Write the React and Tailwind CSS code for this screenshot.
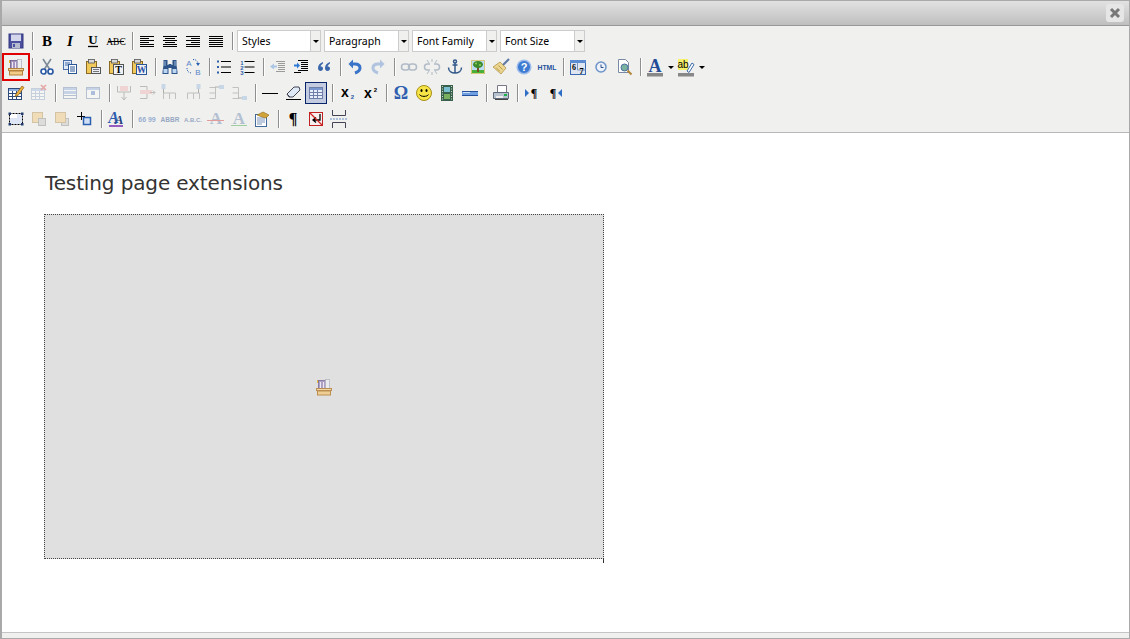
const Grid = ({x=3,y=4,w=14,h=12,c="#7b93bd",head="#8fb0e0",bg="#fff"}) => (
  <>
    <rect x={x+.5} y={y+.5} width={w-1} height={h-1} fill={bg} stroke={c}/>
    <rect x={x+1} y={y+1} width={w-2} height="2" fill={head}/>
    <path d={`M${x+1} ${y+5.5}H${x+w-1}M${x+1} ${y+8.5}H${x+w-1}M${x+4.5} ${y+3}V${y+h-1}M${x+8.5} ${y+3}V${y+h-1}`} stroke={c} fill="none"/>
  </>
);
const Lines = ({rows}) => <path d={rows.map(([a,b],i)=>`M${a} ${5.5+i*2}H${b}`).join("")} stroke="#000"/>;
const T = ({x=10,y=14,s=9,c="#000",w="bold",f="Liberation Sans",st="normal",children}) => (
  <text x={x} y={y} fontSize={s} fill={c} fontWeight={w} fontFamily={`"${f}", sans-serif`} fontStyle={st} textAnchor="middle">{children}</text>
);
const Basket = () => (
  <>
    <rect x="3" y="3" width="2" height="3" fill="#e8b52e"/>
    <rect x="4.500" y="3.500" width="7" height="8" fill="#a596c0" stroke="#5d4f86" strokeWidth=".7"/>
    <path d="M6.500 5v6M9.500 5v6" stroke="#efeaf6"/>
    <rect x="11.500" y="2.500" width="4" height="9" fill="#eceef2" stroke="#a8acb8" strokeWidth=".7"/>
    <rect x="2.500" y="11.500" width="15" height="2" fill="#f2d59a" stroke="#b5803a"/>
    <rect x="3.500" y="14" width="13" height="4" fill="#f3cd88" stroke="#b5803a"/>
  </>
);
const InsertCols = ({top, mirror, children}) => (
  <g opacity=".38">
    <g transform={mirror?"translate(20,0) scale(-1,1)":undefined}>
      <path d={top?"M3.500 16v-6h12v6M9.500 10v6":"M3.500 4.500h6v11h-6M3.500 10h6"} stroke="#777" fill="none"/>
    </g>
    {children}
  </g>
);
const Pil = ({x=10,y=15,s=13}) => <T x={x} y={y} s={s} f="Liberation Serif">¶</T>;
const Clip = () => <><rect x="3.500" y="4.500" width="10" height="12" fill="#f1c95a" stroke="#8b6a26"/><rect x="5.500" y="2.500" width="6" height="3.500" fill="#d8d8d8" stroke="#555" strokeWidth=".8"/></>;
const icons = {
  save: <><rect x="3" y="3" width="14" height="14" fill="#4a4fa0" stroke="#33387f"/><rect x="5" y="3.500" width="10" height="6.500" fill="#d4d7ec"/><rect x="6" y="12" width="8" height="5" fill="#b6bace"/><rect x="7" y="13" width="2" height="3" fill="#4a4fa0"/></>,
  bold: <T s={15} y={15} f="Liberation Serif">B</T>,
  italic: <T s={15} y={15} f="Liberation Serif" st="italic">I</T>,
  under: <><T s={13} y={13} f="Liberation Serif">U</T><path d="M5 15.500H15" stroke="#000" strokeWidth="1.300"/></>,
  strike: <><T s={9.500} y={13.500} w="normal" f="Liberation Serif">ABC</T><path d="M2 10.500H18" stroke="#000"/></>,
  left: <Lines rows={[[3,17],[3,12],[3,17],[3,12],[3,17],[3,17]]}/>,
  center: <Lines rows={[[3,17],[5,15],[3,17],[5,15],[3,17],[3,17]]}/>,
  right: <Lines rows={[[3,17],[8,17],[3,17],[8,17],[3,17],[3,17]]}/>,
  full: <Lines rows={[[3,17],[3,17],[3,17],[3,17],[3,17],[3,17]]}/>,
  box: <Basket/>,
  cut: <><path d="M6 2l6.500 10M14 2L7.500 12" stroke="#7d8a99" strokeWidth="1.600"/><circle cx="6.500" cy="14.500" r="2.500" fill="#fff" stroke="#2d5aa5" strokeWidth="1.700"/><circle cx="13.500" cy="14.500" r="2.500" fill="#fff" stroke="#2d5aa5" strokeWidth="1.700"/></>,
  copy: <><rect x="3.500" y="3.500" width="8" height="9" fill="#dfe9f7" stroke="#4a6fa8"/><path d="M5 6h5M5 8h5" stroke="#4a6fa8"/><rect x="8.500" y="7.500" width="8" height="9" fill="#fff" stroke="#2b5797"/><path d="M10 10h5M10 12h5M10 14h5" stroke="#2b5797"/></>,
  paste: <><Clip/><rect x="8.500" y="10.500" width="9" height="6" fill="#e8edf5" stroke="#555"/><path d="M10 12.500h6M10 14.500h6" stroke="#777"/></>,
  pastet: <><Clip/><rect x="7.500" y="7.500" width="10" height="10" fill="#eef1f5" stroke="#555"/><T x={12.500} y={16} s={10} f="Liberation Serif">T</T></>,
  pastew: <><Clip/><rect x="7.500" y="7.500" width="10" height="10" fill="#eef1f5" stroke="#2b5797"/><T x={12.500} y={16} s={9.500} c="#2b4fa5" f="Liberation Serif">W</T></>,
  find: <><path d="M3.500 3h4v5h1v-1h3v1h1V3h4v5l1 7v2h-6V11h-3v6h-6v-2l1-7z" fill="#2c5488"/><rect x="3.500" y="12" width="4" height="4" fill="#bcd6f2"/><rect x="12.500" y="12" width="4" height="4" fill="#bcd6f2"/><path d="M5 4v5M15 4v5" stroke="#9db8d8"/></>,
  replace: <><T x={6} y={9} s={8} c="#5a86c8" w="normal">A</T><T x={15} y={17.500} s={8} c="#5a86c8" w="normal">B</T><path d="M4 11c0 3.500 2 5 5 5M10 2.500c3 0 5 1.500 5 5" stroke="#2b5fb0" strokeDasharray="1 1" fill="none"/><path d="M13 6l2 3 2-3z" fill="#2b5fb0"/></>,
  ul: <><path d="M3 4.500h2M3 10h2M3 15.500h2" stroke="#2e5fa8" strokeWidth="2"/><path d="M7 4.500h10M7 10h10M7 15.500h10" stroke="#000"/></>,
  ol: <><T x={5} y={7.500} s={6} c="#2e5fa8">1</T><T x={5} y={12.500} s={6} c="#2e5fa8">2</T><T x={5} y={18} s={6} c="#2e5fa8">3</T><path d="M7.500 4.500h10M7.500 10h10M7.500 15.500h10" stroke="#000"/></>,
  outdent: <g opacity=".35"><path d="M8 4.500h9M10 6.500h7M10 8.500h7M10 10.500h7M10 12.500h7M8 14.500h9" stroke="#000"/><path d="M2 9.500l4-3v2h3v2H6v2z" fill="#2e78d6"/></g>,
  indent: <><path d="M7 3.500h10M10 5.500h7M10 7.500h7M10 9.500h7M10 11.500h7M7 13.500h10M3 15.500h7" stroke="#000"/><path d="M9 8.500l-3-3v2H3v2h3v2z" fill="#2e78d6"/></>,
  quote: <path d="M9 5C6 6 4 8 4 11c0 2 1 3 2.500 3S9 13 9 11.500 8 9.500 6.500 9.500C7 8 8 7 9 6.500zM16 5c-3 1-5 3-5 6 0 2 1 3 2.500 3s2.500-1 2.500-2.500-1-2-2.500-2c.5-1.500 1.500-2.500 2.500-3z" fill="#3a66ac"/>,
  undo: <><path d="M7 7h3c3 0 5 1.500 5 4s-2 4-5 5" stroke="#3a74c9" strokeWidth="3" fill="none"/><path d="M8 2.500v9L3.500 7z" fill="#3a74c9"/></>,
  redo: <g opacity=".35" transform="translate(20,0) scale(-1,1)"><path d="M7 7h3c3 0 5 1.500 5 4s-2 4-5 5" stroke="#3a74c9" strokeWidth="3" fill="none"/><path d="M8 2.500v9L3.500 7z" fill="#3a74c9"/></g>,
  link: <g opacity=".35" fill="none" stroke="#3d5a80" strokeWidth="1.500"><rect x="2.500" y="7" width="8" height="6" rx="3"/><rect x="9.500" y="7" width="8" height="6" rx="3"/></g>,
  unlink: <g opacity=".35" fill="none" stroke="#3d5a80" strokeWidth="1.500"><path d="M8 7H5.500a3 3 0 000 6H8M12 7h2.500a3 3 0 010 6H12"/><path d="M10 2v3M10 15v3M5 3l2 3M15 3l-2 3M5 17l2-3M15 17l-2-3" strokeWidth="1"/></g>,
  anchor: <g fill="none" stroke="#345a8c" strokeWidth="1.500"><circle cx="10" cy="4.500" r="1.500"/><path d="M10 6v10M7.500 8h5M3.500 10.500c0 3.500 3 5.500 6.500 5.500s6.500-2 6.500-5.500"/></g>,
  image: <><rect x="3" y="3" width="14" height="14" fill="#bcdcf4"/><rect x="3" y="13" width="14" height="4" fill="#46b038"/><path d="M9 10h2v5H9z" fill="#7a5020"/><ellipse cx="10" cy="7.500" rx="5" ry="3.500" fill="#3a8a2e"/><circle cx="8" cy="6.500" r="1" fill="#9ccc55"/><circle cx="12" cy="8" r="1" fill="#9ccc55"/><path d="M3.500 3.500h13v13h-13z" fill="none" stroke="#d8c87a"/></>,
  clean: <><path d="M11.500 8.500L18 2" stroke="#5e7ca6" strokeWidth="2.200"/><path d="M9 5l6 6-5 6-8-7z" fill="#ecd690" stroke="#a88a3d" strokeWidth=".7"/><path d="M5 10.500l4 4M7.500 8.500l4 4" stroke="#b69a4d"/></>,
  help: <><circle cx="10" cy="10" r="6.800" fill="#3d7ad1" stroke="#9dbceb" strokeWidth="1.500"/><T y={14} s={11} c="#fff">?</T></>,
  html: <T y={13} s={6.800} c="#24509c">HTML</T>,
  date: <><rect x="2.500" y="3.500" width="15" height="14" fill="#dfe6f1" stroke="#3a6ab0"/><rect x="2" y="3" width="16" height="3" fill="#5b8bd0"/><path d="M9.500 6v7h8" stroke="#7b93bd" fill="none"/><T x={6} y={13} s={8} f="Liberation Serif">6</T><T x={13.500} y={17} s={9} f="Liberation Serif">7</T></>,
  time: <><circle cx="10" cy="10" r="5" fill="#eef3fb" stroke="#6d93c8" strokeWidth="1.500"/><path d="M10 7.500v3h2.500" stroke="#2a4c84" fill="none"/></>,
  preview: <><path d="M4.500 2.500h7l3 3v10h-10z" fill="#fff" stroke="#7a8aa5"/><circle cx="10.500" cy="10.500" r="3.500" fill="#79b3a0" stroke="#4c6fa0"/><path d="M13.500 13.500l4 4" stroke="#b28435" strokeWidth="2"/></>,
  fore: <><T y={15} s={18} c="#234d96" f="Liberation Serif">A</T><rect x="2" y="16" width="16" height="3.500" fill="#888"/></>,
  back: <><rect x="2" y="2" width="10" height="11" fill="#f5f06a"/><T x={7} y={10.500} s={10} w="normal">ab</T><path d="M11 14l5-8 2 1.500-5 8z" fill="#fff" stroke="#3e6aa8"/><rect x="2" y="16" width="16" height="3.500" fill="#888"/></>,
  tedit: <><Grid x={2} y={5} w={14} h={12} c="#2d4a78"/><path d="M10 11l6-8 2 1.500-6 8-3 1z" fill="#f0b23e" stroke="#8a5c14" strokeWidth=".7"/></>,
  tdel: <g opacity=".35"><Grid x={2} y={5} w={14} h={12}/><path d="M12 2l5 5M17 2l-5 5" stroke="#d02020" strokeWidth="1.600"/></g>,
  row: <g opacity=".35"><rect x="3.500" y="4.500" width="13" height="11" fill="#fff" stroke="#4a6a9c"/><rect x="4" y="5" width="12" height="2" fill="#7aa0d8"/><rect x="4" y="8" width="12" height="3" fill="#7aa0d8"/><path d="M4 12.500h12" stroke="#4a6a9c"/></g>,
  cell: <g opacity=".35"><rect x="3.500" y="4.500" width="13" height="11" fill="#fff" stroke="#4a6a9c"/><rect x="4" y="5" width="12" height="2" fill="#7aa0d8"/><rect x="8" y="8" width="4" height="4" fill="#2f63b8"/></g>,
  merge: <g opacity=".38"><path d="M3.500 3v6h13V3M10 9v8M7.500 14l2.500 3 2.500-3" stroke="#666" fill="none"/><rect x="6" y="3" width="8" height="5" fill="#f0a8a8"/></g>,
  split: <g opacity=".38"><path d="M3 3.500h7v12H3M3 9.500h7" stroke="#666" fill="none"/><rect x="3" y="7" width="12" height="4" fill="#f0a8a8"/><path d="M13 9.500h5M16 7.500l2 2-2 2" stroke="#666" fill="none"/></g>,
  rowb: <InsertCols top><rect x="1.500" y="1" width="4" height="5" fill="#8ab0e0"/><path d="M3.500 6v4" stroke="#444"/></InsertCols>,
  rowa: <InsertCols top mirror><rect x="13.500" y="1" width="4" height="5" fill="#8ab0e0"/><path d="M15.500 6v4" stroke="#444"/></InsertCols>,
  colb: <InsertCols><rect x="13" y="2" width="5" height="4" fill="#8ab0e0"/><path d="M9 4h4" stroke="#444"/></InsertCols>,
  cola: <InsertCols><rect x="13" y="13" width="5" height="4" fill="#8ab0e0"/><path d="M9 15h4" stroke="#444"/></InsertCols>,
  hr: <path d="M2 10.500h16" stroke="#000"/>,
  eraser: <><path d="M4 11l7-7h5l1 3-7 7H6z" fill="#dfe9f5" stroke="#445"/><path d="M4 11l3 3" stroke="#445"/><path d="M3 16.500h15" stroke="#000"/></>,
  table: <Grid x={3} y={4} w={14} h={12} c="#6d7fa8" head="#7a97cf" bg="#e8eefa"/>,
  sub: <><T x={8} y={14} s={14}>x</T><T x={15.500} y={16} s={6} c="#2b56a6">2</T></>,
  sup: <><T x={8} y={15} s={14}>x</T><T x={15.500} y={9} s={6}>2</T></>,
  omega: <T y={16} s={18} c="#2f5fae" f="Liberation Serif">Ω</T>,
  smile: <><circle cx="10" cy="10" r="7.500" fill="#f6e346" stroke="#a88f16"/><ellipse cx="7.500" cy="7.500" rx="1" ry="1.600" fill="#000"/><ellipse cx="12.500" cy="7.500" rx="1" ry="1.600" fill="#000"/><path d="M5.500 11.500c1 2.500 8 2.500 9 0" stroke="#000" fill="none"/></>,
  film: <><rect x="4" y="2" width="12" height="16" fill="#39604a"/><rect x="7" y="4" width="6" height="5" fill="#78c0d0"/><rect x="7" y="11" width="6" height="5" fill="#78b060"/><path d="M5.500 3v14M14.500 3v14" stroke="#c8d8c8" strokeDasharray="1 1.500"/></>,
  ruler: <><rect x="2" y="8" width="16" height="5" fill="#6f9fe0"/><path d="M2 8.500h16" stroke="#24509c"/><path d="M2 12.500h16" stroke="#24509c"/><rect x="3" y="9" width="7" height="1" fill="#cfe0f8"/></>,
  print: <><path d="M6.500 2.500h9v7h-9z" fill="#fff" stroke="#778"/><path d="M2.500 9.500h15v6h-15z" fill="#b9c3cf" stroke="#5c6a7c"/><path d="M4 16.500h13" stroke="#444"/><rect x="13" y="11" width="3" height="2" fill="#1bb04a"/><rect x="5" y="13" width="7" height="2" fill="#eee"/></>,
  ltr: <><path d="M3 6v8l4-4z" fill="#2e6ec5"/><Pil x={12} y={14} s={12}/></>,
  rtl: <><Pil x={8} y={14} s={12}/><path d="M17 6v8l-4-4z" fill="#2e6ec5"/></>,
  sel: <><rect x="3.500" y="4.500" width="13" height="11" fill="#dfe7f7" stroke="#000" strokeDasharray="2 1"/><path d="M4 5h7v4H4z" fill="#fff"/><path d="M2.500 3.500h2.500v2.500H2.500zM15 3.500h2.500v2.500H15zM2.500 14h2.500v2.500H2.500zM15 14h2.500v2.500H15z" fill="#1e3a6e"/></>,
  front: <g opacity=".45"><rect x="3.500" y="3.500" width="10" height="10" fill="#f0c878" stroke="#b09050"/><rect x="9.500" y="9.500" width="7" height="7" fill="#c4c4c4" stroke="#888"/></g>,
  backw: <g opacity=".45"><rect x="9.500" y="9.500" width="7" height="7" fill="#c4c4c4" stroke="#888"/><rect x="3.500" y="3.500" width="10" height="10" fill="#f0c878" stroke="#b09050"/></g>,
  abs: <><path d="M2 7.500h8M6.500 3v8" stroke="#000"/><rect x="8.500" y="8.500" width="7" height="7" fill="#cfe0f6" stroke="#2b5fb0" strokeWidth="1.500"/></>,
  style: <><T x={7.500} y={14} s={16} c="#2d5cae" f="Liberation Serif" st="italic">A</T><T x={13} y={15} s={13} c="#25417e" f="Liberation Serif" st="italic">A</T><path d="M3 17h14" stroke="#7a2cb0" strokeWidth="1.500"/></>,
  cite: <g opacity=".45"><T y={13} s={7} c="#2b5fb0">66 99</T></g>,
  abbr: <g opacity=".45"><T y={13} s={6.500} c="#2b4f8f">ABBR</T></g>,
  acro: <g opacity=".45"><T y={13} s={6} c="#2b4f8f">A.B.C.</T></g>,
  del: <g opacity=".4"><T y={15} s={17} c="#5a7aa8" f="Liberation Serif">A</T><path d="M1 11.500h17" stroke="#d02020"/></g>,
  ins: <g opacity=".4"><T y={15} s={17} c="#5a7aa8" f="Liberation Serif">A</T><path d="M2 16.500h16" stroke="#20a020"/></g>,
  attr: <><rect x="3.500" y="5.500" width="11" height="12" fill="#fff" stroke="#406a9c"/><path d="M5 9h8M5 11h8M5 13h8M5 15h5" stroke="#7a92b8"/><path d="M5 6l6-3 6 3-3 3-4-1z" fill="#d2a43a" stroke="#8a6a1a" strokeWidth=".6"/></>,
  pil: <Pil y={15} s={16}/>,
  nb: <><rect x="3.500" y="3.500" width="13" height="13" fill="#f8f0f0" stroke="#c02020"/><path d="M14 5v6H8M10 8.500l-3 2.500 3 2.500" stroke="#000" strokeWidth="1.300" fill="none"/><path d="M4 4l12 12" stroke="#d02020" strokeWidth="1.300"/></>,
  pb: <><path d="M3.500 1v5.500h13V1M3.500 19v-5.500h13V19" stroke="#445" fill="none"/><path d="M1 10h18" stroke="#6a90c8" strokeDasharray="2 1"/></>,
};
const rows = [
  "save | bold italic under strike | left center right full | SELECT",
  "box | cut copy paste pastet pastew | find replace | ul ol | outdent indent quote | undo redo | link unlink anchor image clean help html | date time preview | fore ARROW back ARROW",
  "tedit tdel | row cell | merge split rowb rowa colb cola | hr eraser table | sub sup | omega smile film ruler | print | ltr rtl",
  "sel front backw abs | style | cite abbr acro del ins attr | pil nb pb",
];
const Select = ({ label, narrow }) => (
  <div className={`flex h-[22px] border border-[#cccccc] bg-white text-[10.5px] leading-[20px] text-black font-['Noto_Sans',sans-serif] ${narrow ? "w-[84px]" : "w-[85px]"}`}>
    <span className="flex-1 pl-[4px]">{label}</span>
    <span className="flex w-[10px] items-center justify-center border-l border-[#cccccc] bg-[#f0f0ee]">
      <span className="h-0 w-0 border-x-[3px] border-t-[3px] border-x-transparent border-t-black" />
    </span>
  </div>
);
function Tool({ id }) {
  if (id === "|") return (
    <div className="flex h-[26px] w-[8px] justify-center pl-[1px] pt-[4px]"><span className="h-[18px] w-[2px] border-l border-r border-l-[#8f8f8f] border-r-white" /></div>
  );
  if (id === "ARROW") return (
    <div className="flex h-[26px] w-[8px] items-center justify-center"><span className="h-0 w-0 border-x-[3px] border-t-[3px] border-x-transparent border-t-black" /></div>
  );
  if (id === "SELECT") return (
    <div className="flex h-[26px] items-center gap-[3px] pl-[1px]">
      {["Styles", "Paragraph", "Font Family", "Font Size"].map((l, i) => <Select key={l} label={l} narrow={i === 0} />)}
    </div>
  );
  const active = id === "table";
  const frame = id === "box";
  return (
    <div className="relative flex h-[26px] w-[23px] items-center pl-[1px]">
      {active && <span className="absolute left-[0px] top-[2px] h-[22px] w-[22px] border border-[#0a246a] bg-[#c2cbe0]" />}
      {frame && <span className="absolute left-[-3px] top-[-1px] h-[28px] w-[28px] border-2 border-[#e00000]" />}
      <svg width="20" height="20" viewBox="0 0 20 20" className="relative">{icons[id]}</svg>
    </div>
  );
}
export default function App() {
  return (
    <div className="flex h-[639px] w-[1130px] flex-col overflow-hidden border border-l-2 border-[#a9a9a9] bg-white">
      <header className="flex h-[25px] shrink-0 items-start justify-end border-b border-[#999999] bg-gradient-to-b from-[#e2e2e2] to-[#bfbfbf] pr-[5px] pt-[3px]">
        <div className="flex h-[18px] w-[18px] items-center justify-center rounded-[3px] bg-[#e6e6e6]">
          <svg width="12" height="12" viewBox="0 0 12 12"><path d="M2 2l8 8M10 2l-8 8" stroke="#777" strokeWidth="3" /></svg>
        </div>
      </header>
      <div className="shrink-0 border-b border-[#b8b8b8] bg-[#f0f0ee] pl-[3px] pt-[2px]">
        {rows.map((r, i) => (
          <div key={i} className="flex h-[26px]">
            {r.split(" ").map((id, j) => <Tool key={j} id={id} />)}
          </div>
        ))}
      </div>
      <main className="min-h-0 flex-1 pl-[42px] pt-[37px]">
        <h1 className="pl-[1px] text-[20px] leading-[26px] tracking-[-0.13px] text-[#333333] font-['DejaVu_Sans',sans-serif]">Testing page extensions</h1>
        <div className="relative mt-[18px] flex h-[345px] w-[560px] items-center justify-center border border-dotted border-[#444444] bg-[#e0e0e0]">
          <svg width="20" height="20" viewBox="0 0 20 20" className="opacity-85"><Basket /></svg>
          <span className="absolute bottom-[-5px] right-[-1px] h-[5px] w-[1px] bg-[#333333]" />
        </div>
      </main>
      <footer className="h-[6px] shrink-0 border-t border-[#c4c4c4] bg-[#f0f0ee]" />
    </div>
  );
}
